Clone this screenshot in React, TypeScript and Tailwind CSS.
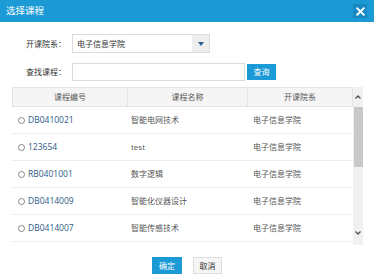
import React, { useState } from "react";

const courses = [
  { code: "DB0410021", name: "智能电网技术", dept: "电子信息学院" },
  { code: "123654", name: "test", dept: "电子信息学院" },
  { code: "RB0401001", name: "数字逻辑", dept: "电子信息学院" },
  { code: "DB0414009", name: "智能化仪器设计", dept: "电子信息学院" },
  { code: "DB0414007", name: "智能传感技术", dept: "电子信息学院" },
];

const font = "font-['Open_Sans','Noto_Sans_CJK_SC',sans-serif]";

const App: React.FC = (): JSX.Element => {
  const [selected, setSelected] = useState<string | null>(null);

  return (
    <div className={`w-[374px] h-[280px] bg-white overflow-hidden ${font}`}>
      {/* title bar */}
      <div className="h-[22px] bg-[#1b9ad6] flex items-center justify-between pl-[6px] pr-[7px]">
        <span className="text-white text-[9.5px] leading-none">选择课程</span>
        <div className="w-[14px] h-[14px] bg-[#1689c2] flex items-center justify-center">
          <svg width="9" height="9" viewBox="0 0 10 10">
            <path d="M1.5 1.5 L8.5 8.5 M8.5 1.5 L1.5 8.5" stroke="white" strokeWidth="2.2" strokeLinecap="square" />
          </svg>
        </div>
      </div>

      {/* filters */}
      <div className="pl-[26px] pt-[12px] text-[8px] text-[#333]">
        <div className="flex items-center h-[19px]">
          <span className="w-[46px]">开课院系：</span>
          <div className="w-[138px] h-[19px] border border-[#dcdcdc] flex">
            <span className="flex-1 pl-[4px] flex items-center">电子信息学院</span>
            <div className="w-[17px] bg-[#eeeeee] flex items-center justify-center">
              <svg width="6" height="4" viewBox="0 0 6 4">
                <path d="M0 0 H6 L3 4 Z" fill="#2a5f8f" />
              </svg>
            </div>
          </div>
        </div>
        <div className="flex items-center h-[18px] mt-[10px]">
          <span className="w-[46px]">查找课程：</span>
          <div className="w-[173px] h-[18px] border border-[#dcdcdc]" />
          <button className="ml-[2px] w-[29px] h-[16px] bg-[#1b9ad6] text-white text-[8px] leading-none">
            查询
          </button>
        </div>
      </div>

      {/* table */}
      <div className="flex ml-[12px] mt-[6px] h-[158px]">
        <div className="w-[341px] text-[8px]">
          <div className="flex h-[20px] bg-[#f5f5f5] border border-[#e4e4e4] text-[#555]">
            <div className="w-[115px] flex items-center justify-center border-r border-[#e4e4e4]">课程编号</div>
            <div className="w-[120px] flex items-center justify-center border-r border-[#e4e4e4]">课程名称</div>
            <div className="flex-1 flex items-center justify-center">开课院系</div>
          </div>
          {courses.map((c) => (
            <div
              key={c.code}
              onClick={() => setSelected(c.code)}
              className="flex h-[27px] border-b border-[#eeeeee] items-center cursor-pointer"
            >
              <div className="w-[115px] flex items-center pl-[6px]">
                <span className="w-[7px] h-[7px] rounded-full border border-[#888] mr-[3px] flex items-center justify-center">
                  {selected === c.code && <span className="w-[3px] h-[3px] rounded-full bg-[#555]" />}
                </span>
                <span className="text-[#2c5a87] text-[8.5px]">{c.code}</span>
              </div>
              <div className="w-[120px] pl-[4px] text-[#555]">{c.name}</div>
              <div className="flex-1 pl-[6px] text-[#555]">{c.dept}</div>
            </div>
          ))}
        </div>
        <div className="w-[10px] bg-[#f1f1f1] flex flex-col items-center">
          <div className="h-[20px] flex items-center justify-center">
            <svg width="6" height="4" viewBox="0 0 6 4">
              <path d="M0.5 3.5 L3 1 L5.5 3.5" stroke="#505050" strokeWidth="1.3" fill="none" />
            </svg>
          </div>
          <div className="w-[9px] h-[60px] bg-[#c8c8c8]" />
          <div className="flex-1" />
          <div className="h-[20px] flex items-center justify-center mb-[2px]">
            <svg width="6" height="4" viewBox="0 0 6 4">
              <path d="M0.5 0.5 L3 3 L5.5 0.5" stroke="#505050" strokeWidth="1.3" fill="none" />
            </svg>
          </div>
        </div>
      </div>

      {/* actions */}
      <div className="flex justify-center gap-[11px] mt-[12px] text-[8px]">
        <button className="w-[30px] h-[17px] bg-[#1b9ad6] text-white leading-none">确定</button>
        <button className="w-[29px] h-[17px] bg-[#f5f5f5] border border-[#dddddd] text-[#333] leading-none">取消</button>
      </div>
    </div>
  );
};

export default App;
